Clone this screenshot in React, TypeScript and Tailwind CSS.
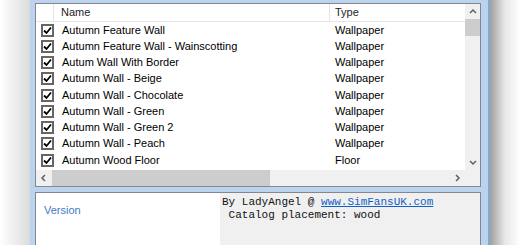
import React from "react";

const rows: [string, string][] = [
  ["Autumn Feature Wall", "Wallpaper"],
  ["Autumn Feature Wall - Wainscotting", "Wallpaper"],
  ["Autum Wall With Border", "Wallpaper"],
  ["Autumn Wall - Beige", "Wallpaper"],
  ["Autumn Wall - Chocolate", "Wallpaper"],
  ["Autumn Wall - Green", "Wallpaper"],
  ["Autumn Wall - Green 2", "Wallpaper"],
  ["Autumn Wall - Peach", "Wallpaper"],
  ["Autumn Wood Floor", "Floor"],
];

function Check() {
  return (
    <div className="w-[13px] h-[13px] border-2 border-[#666] bg-white flex items-center justify-center">
      <svg width="9" height="9" viewBox="0 0 9 9">
        <path d="M1 4.5 L3.5 7 L8 1.5" stroke="#000" strokeWidth="1.8" fill="none" />
      </svg>
    </div>
  );
}

function Chevron({ dir }: { dir: "up" | "down" | "left" | "right" }) {
  const d = {
    up: "M1 5 L4 2 L7 5",
    down: "M1 2 L4 5 L7 2",
    left: "M5 1 L2 4 L5 7",
    right: "M2 1 L5 4 L2 7",
  }[dir];
  return (
    <svg width="8" height="8" viewBox="0 0 8 8">
      <path d={d} stroke="#606060" strokeWidth="1.5" fill="none" />
    </svg>
  );
}

export default function App() {
  return (
    <div
      className="w-[520px] h-[245px] flex bg-white overflow-hidden"
      style={{ fontFamily: '"Liberation Sans", Arial, sans-serif' }}
    >
      <div className="w-[30px] h-full bg-gradient-to-r from-white to-[#dcdcdc]" />
      <div className="w-[460px] h-full bg-[#bcd3ee] border-r-2 border-[#86a9d4] pt-[3px] pl-[5px] pr-[7px] flex flex-col">
        {/* List view */}
        <div className="h-[184px] border border-[#828790] bg-white flex flex-col">
          <div className="flex h-[166px]">
            <div className="flex-1 flex flex-col">
              <div className="h-[18px] flex border-b border-[#e5e5e5] text-[11px] text-[#222] leading-none">
                <div className="w-[18px] border-r border-[#e5e5e5]" />
                <div className="w-[276px] border-r border-[#e5e5e5] flex items-center pl-[7px]">Name</div>
                <div className="flex-1 flex items-center pl-[5px]">Type</div>
              </div>
              {rows.map(([n, t]) => (
                <div key={n} className="h-[16.25px] flex items-center text-[11px] text-black leading-none">
                  <div className="w-[18px] pl-[5px] flex items-center">
                    <Check />
                  </div>
                  <div className="w-[276px] pl-[8px]">{n}</div>
                  <div className="pl-[5px]">{t}</div>
                </div>
              ))}
            </div>
            <div className="w-[15px] bg-[#f0f0f0] flex flex-col">
              <div className="h-[15px] flex items-center justify-center">
                <Chevron dir="up" />
              </div>
              <div className="h-[17px] bg-[#cdcdcd]" />
              <div className="flex-1" />
              <div className="h-[15px] flex items-center justify-center">
                <Chevron dir="down" />
              </div>
            </div>
          </div>
          <div className="flex h-[16px] bg-[#f0f0f0]">
            <div className="w-[16px] flex items-center justify-center">
              <Chevron dir="left" />
            </div>
            <div className="w-[218px] bg-[#cdcdcd]" />
            <div className="flex-1" />
            <div className="w-[15px] flex items-center justify-center">
              <Chevron dir="right" />
            </div>
            <div className="w-[15px] bg-[#f0f0f0]" />
          </div>
        </div>
        {/* Bottom panel */}
        <div className="mt-[5px] flex-1 border border-[#828790] border-b-0 flex">
          <div className="w-[184px] bg-white pl-[8px] pt-[12px] text-[11px] text-[#3d7cc4] leading-none">
            Version
          </div>
          <div
            className="flex-1 bg-[#f0f0f0] pt-[3px] pl-[2px] text-[11px] leading-[13px] text-[#111] whitespace-pre"
            style={{ fontFamily: '"Liberation Mono", "Courier New", monospace' }}
          >
            <div>
              By LadyAngel @ <span className="text-[#1060c8] underline">www.SimFansUK.com</span>
            </div>
            <div> Catalog placement: wood</div>
          </div>
        </div>
      </div>
      <div className="w-[30px] h-full bg-gradient-to-r from-[#a0a0a0] via-[#e8e8e8] to-white" />
    </div>
  );
}
